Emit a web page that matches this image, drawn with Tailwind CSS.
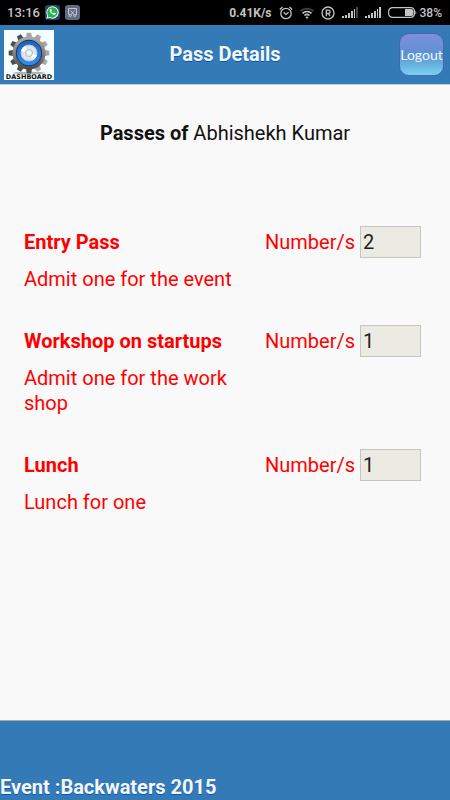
<!DOCTYPE html>
<html lang="en">
<head>
<meta charset="utf-8">
<meta name="viewport" content="width=device-width, initial-scale=1">
<title>Pass Details</title>
<script src="https://cdn.jsdelivr.net/npm/@tailwindcss/browser@4"></script>
</head>
<body class="flex min-h-screen flex-col bg-[#f9f9f9] font-[Roboto,sans-serif] text-xl/[25px] text-[#111]">

<div class="flex h-[25px] shrink-0 items-center justify-between bg-black pr-2 pl-[7px] text-[#c4c4c4]">
  <div class="flex items-center gap-[5px]">
    <span class="text-[13px] font-medium">13:16</span>
    <svg class="size-[15px]" viewBox="0 0 15 15" aria-label="WhatsApp">
      <rect width="15" height="15" rx="3" fill="#29416a"/>
      <path d="M1.3 13.7l.9-3.2A6.2 6.2 0 1 1 4.700 12.900z" fill="#eefaf0"/>
      <path d="M2.600 12.400l.6-2A5.200 5.200 0 1 1 5 12z" fill="#22b44c"/>
      <path d="M5.200 4.200c-1 1-.5 2.400.8 3.800 1.400 1.500 3.200 2.400 4.300 1.500.6-.5.600-1.100.3-1.300l-1.300-.7c-.4-.1-.7.8-1.100.7C7.300 7.900 6.500 7 6.300 6.500c0-.3.700-.6.600-1l-.6-1.200c-.2-.4-.8-.4-1.100-.1z" fill="#fff"/>
    </svg>
    <svg class="size-[15px]" viewBox="0 0 15 15" fill="none" stroke="#c3c7d1" aria-label="Screenshot">
      <rect width="15" height="15" rx="3" fill="#636b81" stroke="none"/>
      <path d="M5 9.500H3.500v-6h8v6H10M5.500 5.500l3.700 4.500M9.500 5.500L5.800 10"/>
      <circle cx="5.300" cy="10.700" r="1" /><circle cx="9.700" cy="10.700" r="1"/>
    </svg>
  </div>
  <div class="flex items-center">
    <span class="mr-[7px] text-xs font-bold">0.41K/s</span>
    <svg class="mr-[7px] h-[14px] w-[14px]" viewBox="0 0 14 14" fill="none" stroke="currentColor" stroke-width="1.300" aria-label="Alarm">
      <circle cx="7" cy="7.500" r="5.200"/><path d="M.8 3.500L3.500 1M13.200 3.500L10.500 1M4.600 6.200L7 8.400l2.600-2.200"/>
    </svg>
    <svg class="mr-[7px] h-[14px] w-[14px]" viewBox="0 0 14 14" fill="none" stroke="currentColor" stroke-width="1.700" aria-label="Wi-Fi">
      <path d="M.5 5.200a9.300 9.300 0 0 1 13 0" stroke="#444"/><path d="M2.500 7.300a6.500 6.500 0 0 1 9 0M4.500 9.500a3.600 3.600 0 0 1 5 0"/><path d="M5.500 11.300L7 13l1.500-1.700a2.200 2.200 0 0 0-3 0z" fill="currentColor" stroke="none"/>
    </svg>
    <svg class="mr-[7px] size-[14px]" viewBox="0 0 14 14" fill="none" stroke="currentColor" stroke-width="1.300" aria-label="Registered">
      <circle cx="7" cy="7" r="6"/><path d="M5.300 10.200V4.200H7.500a1.600 1.600 0 0 1 0 3.300H5.300M7.500 7.500l1.500 2.700"/>
    </svg>
    <svg class="mr-[7px] h-3 w-4" viewBox="0 0 16 12" fill="currentColor" aria-label="Signal, SIM 1">
      <path d="M0 9h2v2H0zM3 8h2v3H3zM6 6h2v5H6zM9 4h2v7H9zM12 2h1v9h-1z"/><path d="M14 0h2v11h-2z" fill="#444"/>
    </svg>
    <svg class="mr-[7px] h-3 w-4" viewBox="0 0 16 12" fill="currentColor" aria-label="Signal, SIM 2">
      <path d="M0 9h2v2H0zM3 8h2v3H3zM6 6h2v5H6zM9 4h2v7H9zM12 2h1v9h-1zM14 0h2v11h-2z"/>
    </svg>
    <svg class="mr-[3px] h-[11px] w-[29px]" viewBox="0 0 29 11" aria-label="Battery">
      <rect x=".6" y=".6" width="26" height="9.800" rx="4" fill="none" stroke="currentColor" stroke-width="1.200"/>
      <path d="M17 2h6a2.500 2.500 0 0 1 2.500 2.500v2A2.500 2.500 0 0 1 23 9h-6zM27.500 3.500q1.500 2 0 4z" fill="currentColor"/>
    </svg>
    <span class="text-xs font-medium">38%</span>
  </div>
</div>

<header class="flex h-[60px] shrink-0 items-center justify-between border-b border-[#c4cfd9] bg-[#347ab7] pr-[6px] pl-1">
  <a href="#dashboard" aria-label="Dashboard" class="w-16 shrink-0">
    <svg class="size-[50px]" viewBox="0 0 50 50">
      <defs>
        <linearGradient id="steel" x1="0" y1="0" x2="0" y2="1"><stop offset="0" stop-color="#aaa"/><stop offset=".5" stop-color="#858585"/><stop offset="1" stop-color="#484848"/></linearGradient>
        <linearGradient id="ring" x1="0" y1="0" x2="0" y2="1"><stop offset="0" stop-color="#2361b4"/><stop offset="1" stop-color="#2d8ff0"/></linearGradient>
        <g id="teeth"><path d="M22 7l.8-4.300h4.400L28 7v32l-.8 4.300h-4.400L22 39z"/></g>
      </defs>
      <rect width="50" height="50" fill="#f6fdff"/>
      <ellipse cx="25" cy="43" rx="16" ry="1.300" fill="#aeb4b6"/>
      <g fill="url(#steel)">
        <use href="#teeth"/><use href="#teeth" transform="rotate(30 25 23)"/><use href="#teeth" transform="rotate(60 25 23)"/><use href="#teeth" transform="rotate(90 25 23)"/><use href="#teeth" transform="rotate(120 25 23)"/><use href="#teeth" transform="rotate(150 25 23)"/>
        <circle cx="25" cy="23" r="16.500"/>
      </g>
      <circle cx="25" cy="23" r="13.200" fill="#17366b"/>
      <circle cx="25" cy="23" r="12.200" fill="url(#ring)"/>
      <circle cx="25" cy="23" r="8" fill="#dfe5e8" stroke="#a9cdf4"/>
      <path d="M25 23l-8-2a8 8 0 0 1 4-5zM25 23l8 2a8 8 0 0 1-4 5z" fill="#fff"/>
      <circle cx="25" cy="23" r="3.500" fill="#e9eef0" stroke="#b5bec3"/>
      <circle cx="25" cy="23" r="1.500" fill="#fff"/>
      <text x="25" y="49" text-anchor="middle" font-family="DejaVu Sans, sans-serif" font-weight="bold" font-size="6.500" fill="#111">DASHBOARD</text>
    </svg>
  </a>
  <h1 class="pl-[2px] font-bold text-[#f6f6f6] [text-shadow:0_1px_0_#0059bc]">Pass Details</h1>
  <div class="flex w-16 shrink-0 justify-end">
    <button class="flex h-[43px] w-[45px] items-center justify-center rounded-[10px] border border-[#4667b4] bg-linear-to-b from-[#7f8ede] via-[#5a91d2] to-[#7bd2ef] font-[Lato,sans-serif] text-sm text-[#f1f8ff]">Logout</button>
  </div>
</header>

<main class="flex grow flex-col px-6 pt-9">
  <h2 class="text-center"><span class="font-bold">Passes of</span> Abhishekh Kumar</h2>

  <div class="mt-20 flex flex-col gap-[33px] pr-[5px] text-[#f00]">
    <section>
      <div class="flex h-[33px] items-start justify-between">
        <h3 class="pt-1 font-bold">Entry Pass</h3>
        <div class="flex items-center gap-[5px]">
          <label for="entry">Number/s</label>
          <input id="entry" value="2" readonly class="h-8 w-[61px] border border-[#c6c6c0] bg-[#ebebe4] px-[2px] text-[#222]">
        </div>
      </div>
      <p class="mt-2 w-[56%]">Admit one for the event</p>
    </section>
    <section>
      <div class="flex h-[33px] items-start justify-between">
        <h3 class="pt-1 font-bold">Workshop on startups</h3>
        <div class="flex items-center gap-[5px]">
          <label for="workshop">Number/s</label>
          <input id="workshop" value="1" readonly class="h-8 w-[61px] border border-[#c6c6c0] bg-[#ebebe4] px-[2px] text-[#222]">
        </div>
      </div>
      <p class="mt-2 w-[56%]">Admit one for the work shop</p>
    </section>
    <section>
      <div class="flex h-[33px] items-start justify-between">
        <h3 class="pt-1 font-bold">Lunch</h3>
        <div class="flex items-center gap-[5px]">
          <label for="lunch">Number/s</label>
          <input id="lunch" value="1" readonly class="h-8 w-[61px] border border-[#c6c6c0] bg-[#ebebe4] px-[2px] text-[#222]">
        </div>
      </div>
      <p class="mt-2 w-[56%]">Lunch for one</p>
    </section>
  </div>
</main>

<footer class="flex h-20 shrink-0 items-end border-t border-[#aaa] bg-[#347ab7]">
  <p class="font-bold text-[#f6f6f6] [text-shadow:0_1px_0_#0059bc]">Event :Backwaters 2015</p>
</footer>
</body>
</html>
